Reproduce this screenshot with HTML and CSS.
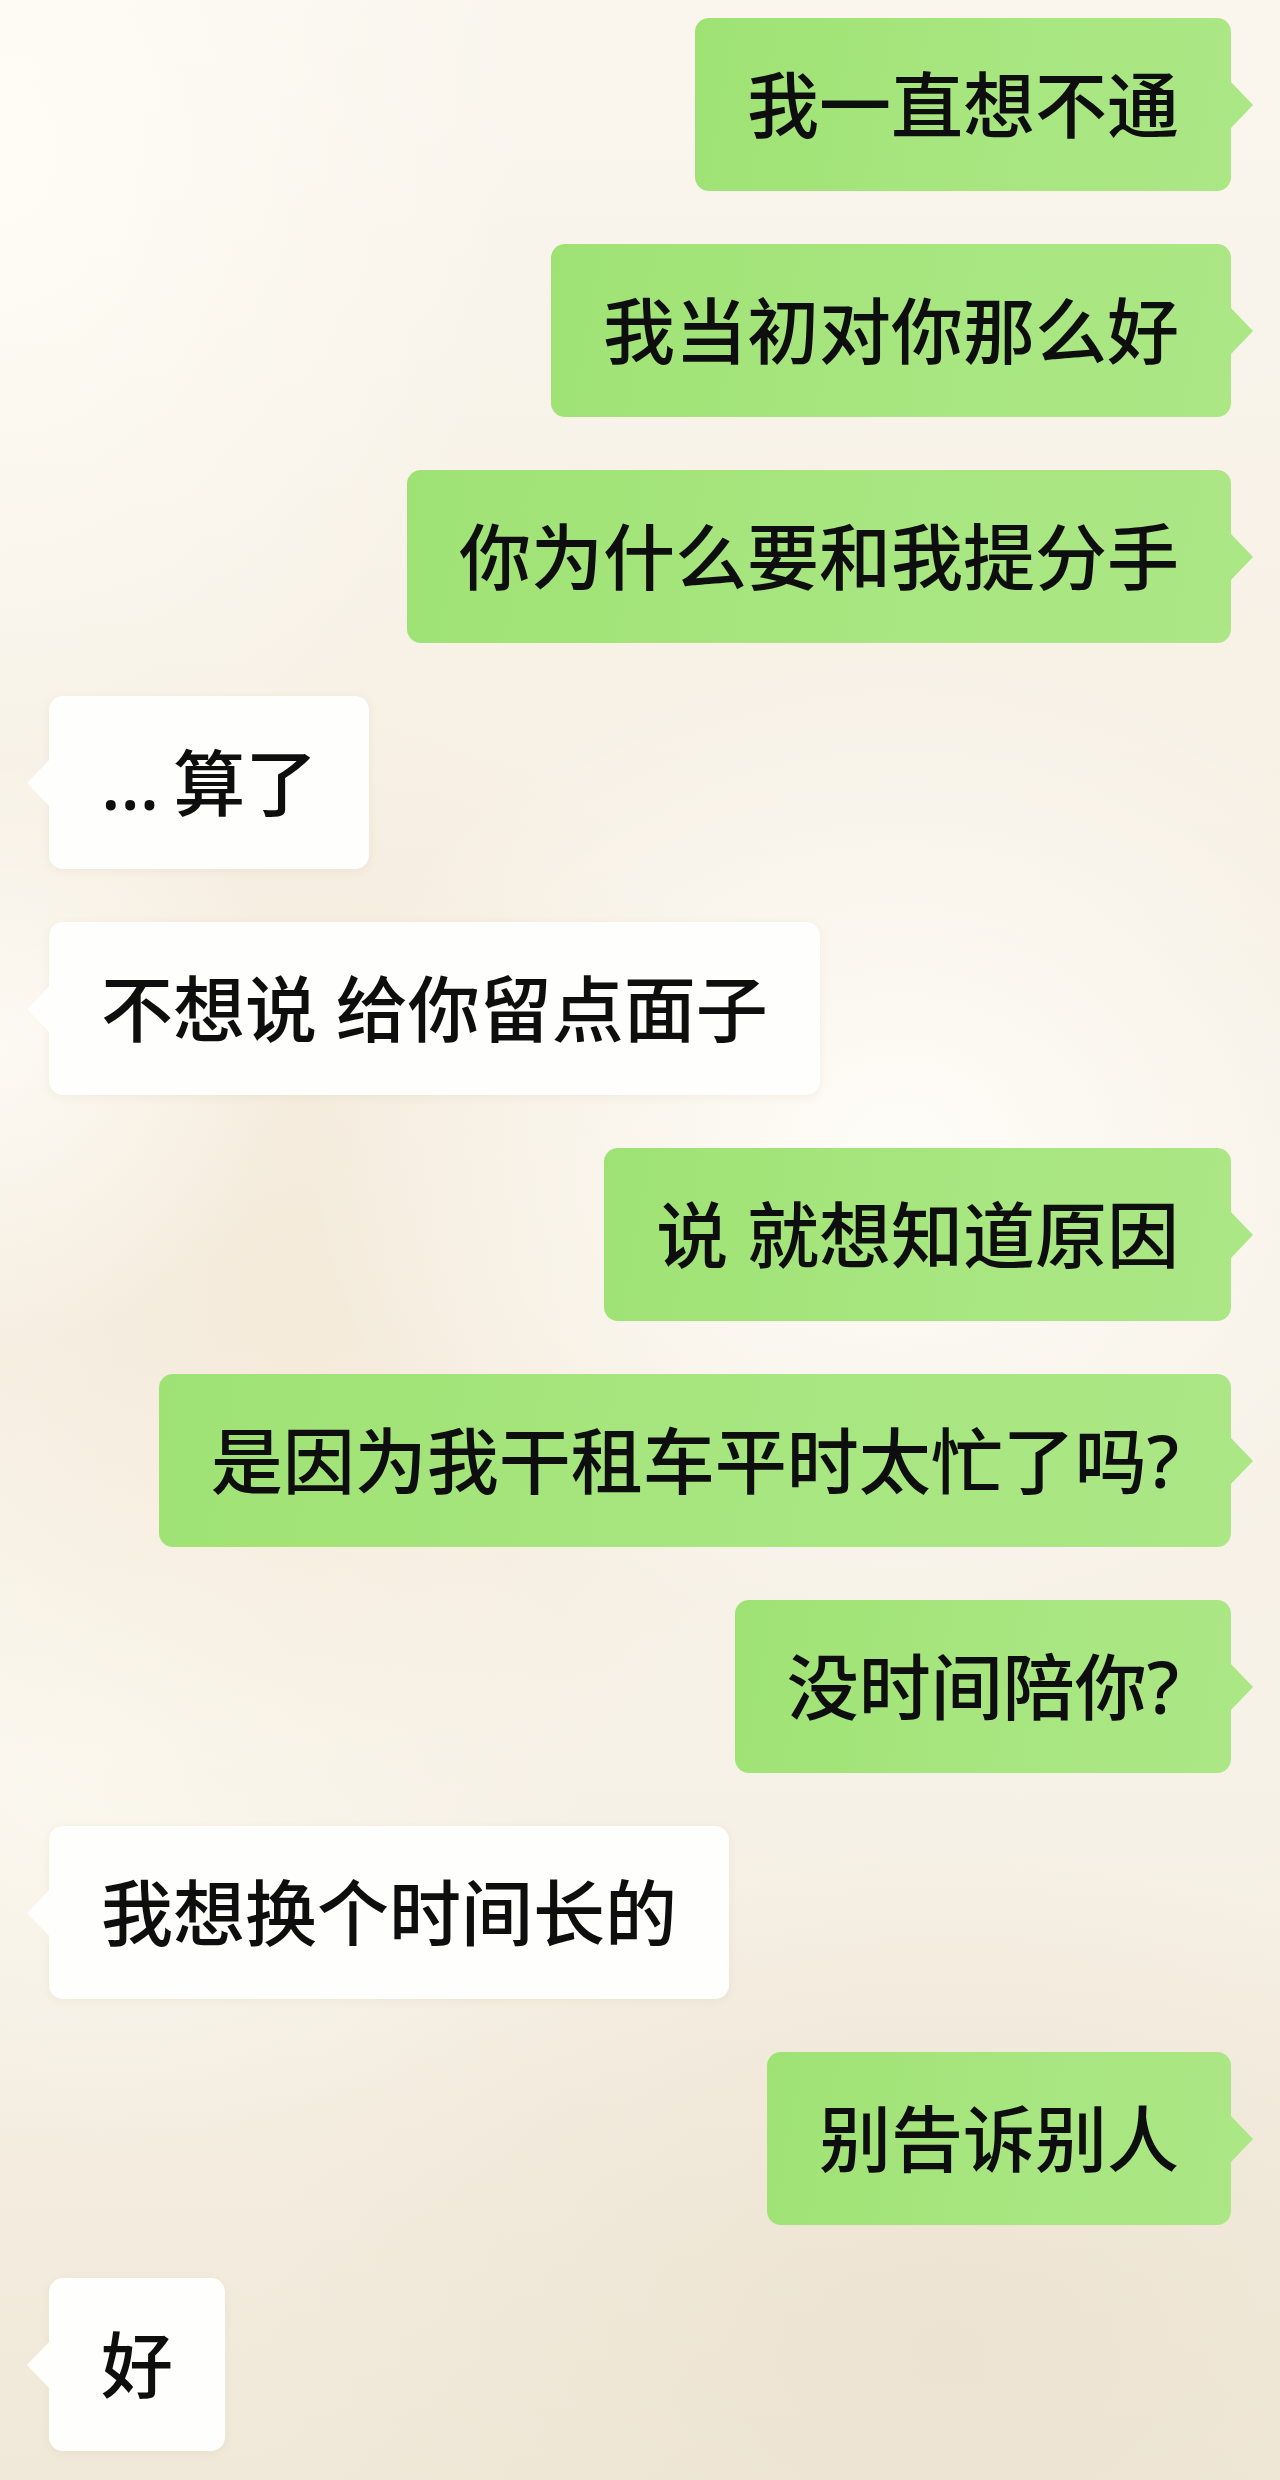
FILE: index.html
```html
<!DOCTYPE html>
<html lang="zh-CN">
<head>
  <meta charset="UTF-8">
  <meta name="viewport" content="width=device-width, initial-scale=1.0">
  <title>聊天记录</title>
  <link rel="stylesheet" href="styles.css">
</head>
<body>
  <div class="chat">
    <div class="row me"><div class="bubble">我一直想不通</div></div>
    <div class="row me"><div class="bubble">我当初对你那么好</div></div>
    <div class="row me"><div class="bubble">你为什么要和我提分手</div></div>
    <div class="row other"><div class="bubble"><span class="dots">…</span>算了</div></div>
    <div class="row other"><div class="bubble">不想说 给你留点面子</div></div>
    <div class="row me"><div class="bubble">说 就想知道原因</div></div>
    <div class="row me"><div class="bubble">是因为我干租车平时太忙了吗?</div></div>
    <div class="row me"><div class="bubble">没时间陪你?</div></div>
    <div class="row other"><div class="bubble">我想换个时间长的</div></div>
    <div class="row me"><div class="bubble">别告诉别人</div></div>
    <div class="row other"><div class="bubble">好</div></div>
  </div>
</body>
</html>
```

FILE: styles.css
```css
html, body {
  margin: 0;
  padding: 0;
}
body {
  font-family: "Noto Sans", "Noto Sans CJK SC", sans-serif;
  font-weight: 500;
  color: #0e0e0e;
  min-height: 2480px;
  background-color: #f6f0e4;
  background-image:
    radial-gradient(ellipse 520px 700px at 0px 150px, rgba(255, 253, 246, 0.9), rgba(255, 253, 246, 0) 100%),
    radial-gradient(ellipse 600px 500px at 900px 1150px, rgba(255, 254, 250, 0.9), rgba(255, 254, 250, 0) 100%),
    radial-gradient(ellipse 300px 300px at 0px 1050px, rgba(255, 253, 248, 0.8), rgba(255, 253, 248, 0) 100%),
    radial-gradient(ellipse 500px 600px at 300px 1300px, rgba(243, 232, 214, 0.7), rgba(243, 232, 214, 0) 100%),
    radial-gradient(ellipse 700px 500px at 950px 2350px, rgba(236, 226, 208, 0.9), rgba(236, 226, 208, 0) 100%),
    radial-gradient(ellipse 500px 400px at 100px 1750px, rgba(252, 249, 240, 0.9), rgba(252, 249, 240, 0) 100%),
    linear-gradient(180deg, #faf6ee 0%, #f6efe3 40%, #f7f2e8 70%, #f0e9d9 100%);
}
.chat {
  display: flex;
  flex-direction: column;
  gap: 53px;
  padding: 18px 49px 0;
}
.row {
  display: flex;
}
.row.me {
  justify-content: flex-end;
}
.row.other {
  justify-content: flex-start;
}
.bubble {
  position: relative;
  font-size: 72px;
  line-height: 101px;
  padding: 36px 52px;
  border-radius: 14px;
  white-space: nowrap;
}
.dots {
  letter-spacing: 14px;
}
.me .bubble {
  background: linear-gradient(100deg, #9fe274 0%, #a7e67f 50%, #abe785 100%);
}
.other .bubble {
  background: #fefefc;
  box-shadow: 0 2px 10px rgba(180, 160, 120, 0.12);
}
.bubble::after {
  content: "";
  position: absolute;
  top: 50%;
  margin-top: -24px;
  border-top: 24px solid transparent;
  border-bottom: 24px solid transparent;
}
.me .bubble::after {
  right: -22px;
  border-left: 23px solid #abe785;
}
.other .bubble::after {
  left: -22px;
  border-right: 23px solid #fefefc;
}
```
